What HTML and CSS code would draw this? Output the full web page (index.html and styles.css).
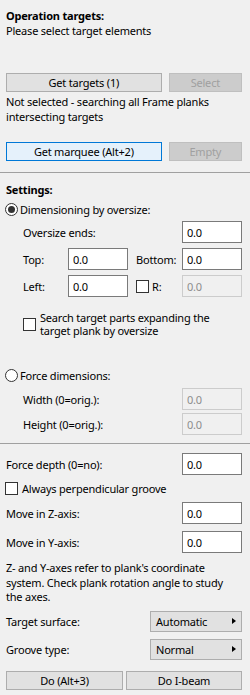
FILE: index.html
```html
<!DOCTYPE html>
<html>
<head>
    <title>Operation targets</title>
    <link rel="stylesheet" href="styles.css">
</head>
<body>
    <div class="panel">
        <div class="title">Operation targets:</div>
        <div class="line">Please select target elements</div>

        <div class="btnrow first">
            <button class="btn wide">Get targets (1)</button>
            <button class="btn small" disabled>Select</button>
        </div>
        <div class="note">Not selected - searching all Frame planks intersecting targets</div>

        <div class="btnrow marq">
            <button class="btn wide focus">Get marquee (Alt+2)</button>
            <button class="btn small" disabled>Empty</button>
        </div>

        <div class="sep sep1"></div>

        <div class="title settings">Settings:</div>
        <div class="radio radio1"><span class="dot on"></span>Dimensioning by oversize:</div>

        <div class="row r-over">
            <span class="lbl indent">Oversize ends:</span>
            <input class="field" value="0.0">
        </div>
        <div class="row r-top">
            <span class="lbl indent short">Top:</span>
            <input class="field" value="0.0">
            <span class="lbl mid">Bottom:</span>
            <input class="field" value="0.0">
        </div>
        <div class="row r-left">
            <span class="lbl indent short">Left:</span>
            <input class="field" value="0.0">
            <span class="lbl mid"><span class="box"></span>R:</span>
            <input class="field" value="0.0" disabled>
        </div>

        <div class="check multi"><span class="box"></span><span>Search target parts expanding the target plank by oversize</span></div>

        <div class="radio radio2"><span class="dot"></span>Force dimensions:</div>
        <div class="row r-width">
            <span class="lbl indent">Width (0=orig.):</span>
            <input class="field" value="0.0" disabled>
        </div>
        <div class="row r-height">
            <span class="lbl indent">Height (0=orig.):</span>
            <input class="field" value="0.0" disabled>
        </div>

        <div class="sep sep2"></div>

        <div class="row r-depth">
            <span class="lbl">Force depth (0=no):</span>
            <input class="field" value="0.0">
        </div>
        <div class="check single"><span class="box"></span><span>Always perpendicular groove</span></div>
        <div class="row r-z">
            <span class="lbl">Move in Z-axis:</span>
            <input class="field" value="0.0">
        </div>
        <div class="row r-y">
            <span class="lbl">Move in Y-axis:</span>
            <input class="field" value="0.0">
        </div>

        <div class="para">Z- and Y-axes refer to plank's coordinate<br>system. Check plank rotation angle to study<br>the axes.</div>

        <div class="row r-surface">
            <span class="lbl">Target surface:</span>
            <button class="drop">Automatic<span class="arrow"></span></button>
        </div>
        <div class="row r-groove">
            <span class="lbl">Groove type:</span>
            <button class="drop">Normal<span class="arrow"></span></button>
        </div>

        <div class="btnrow bottom">
            <button class="btn half">Do (Alt+3)</button>
            <button class="btn half">Do I-beam</button>
        </div>
    </div>
</body>
</html>
```

FILE: styles.css
```css
html, body {
    margin: 0;
    padding: 0;
    background-color: #f0f0f0;
}
body {
    font-family: "Noto Sans", "Open Sans", sans-serif;
    font-size: 11px;
    letter-spacing: -0.2px;
    color: #000;
}
.panel {
    width: 250px;
    height: 695px;
    box-sizing: border-box;
    padding: 8px 8px 0 6px;
    display: flex;
    flex-direction: column;
}
.title {
    font-weight: bold;
    line-height: 15px;
    height: 15px;
}
.line {
    line-height: 15px;
}
.btnrow {
    display: flex;
    gap: 7px;
    height: 19px;
}
.btnrow.first { margin-top: 35px; }
.btnrow.marq { margin-top: 18px; }
.btnrow.bottom { margin-top: 11px; gap: 3px; }
.btn {
    font: inherit;
    letter-spacing: inherit;
    color: #000;
    height: 19px;
    padding: 0;
    margin: 0;
    background-color: #e1e1e1;
    border: 1px solid #adadad;
    line-height: 17px;
}
.btn.wide { width: 157px; }
.btn.small { width: 74px; }
.btn.half { width: 118px; }
.btn.half + .btn.half { width: 117px; }
.btn.focus {
    background-color: #e5f1fb;
    border-color: #0078d7;
}
.btn:disabled {
    background-color: #cccccc;
    border-color: #bfbfbf;
    color: #a0a0a0;
}
.note {
    margin-top: 2px;
    line-height: 15px;
}
.sep {
    height: 1px;
    background-color: #a0a0a0;
    margin-left: -6px;
    margin-right: -8px;
}
.sep1 { margin-top: 11px; }
.sep2 { margin-top: 8px; }
.settings { margin-top: 9px; }
.radio {
    display: flex;
    align-items: center;
    height: 15px;
    line-height: 15px;
    margin-left: -1px;
}
.radio1 { margin-top: 5px; }
.radio2 { margin-top: 31px; }
.dot {
    width: 13px;
    height: 13px;
    border: 1px solid #333;
    border-radius: 50%;
    background-color: #fff;
    margin-right: 2px;
    box-sizing: border-box;
    position: relative;
}
.dot.on::after {
    content: "";
    position: absolute;
    left: 2px;
    top: 2px;
    width: 7px;
    height: 7px;
    border-radius: 50%;
    background-color: #333;
}
.row {
    display: flex;
    align-items: center;
    height: 22px;
}
.r-over { margin-top: 4px; }
.r-top { margin-top: 5px; }
.r-left { margin-top: 5px; }
.r-width { margin-top: 5px; }
.r-height { margin-top: 3px; }
.r-depth { margin-top: 9px; }
.r-z { margin-top: 6px; }
.r-y { margin-top: 7px; }
.r-surface { margin-top: 6px; height: 21px; }
.r-groove { margin-top: 7px; height: 21px; }
.lbl {
    flex: 1;
    display: flex;
    align-items: center;
}
.lbl.indent { padding-left: 17px; }
.lbl.short { flex: 0 0 62px; box-sizing: border-box; }
.lbl.mid { padding-left: 8px; }
.lbl.mid .box { margin-right: 3px; }
.field {
    font: inherit;
    letter-spacing: inherit;
    color: #000;
    width: 60px;
    height: 22px;
    box-sizing: border-box;
    border: 1px solid #7a7a7a;
    background-color: #fff;
    padding: 0 0 0 4px;
    margin: 0;
}
.field:disabled {
    border-color: #cccccc;
    background-color: #f0f0f0;
    color: #8d8d8d;
}
.box {
    display: inline-block;
    width: 13px;
    height: 13px;
    box-sizing: border-box;
    border: 1px solid #333;
    background-color: #fff;
    flex: none;
}
.check {
    display: flex;
    gap: 4px;
}
.check.multi {
    margin-top: 14px;
    padding-left: 17px;
    line-height: 13px;
    align-items: center;
}
.check.single {
    margin-top: 6px;
    line-height: 15px;
    align-items: center;
    margin-left: -1px;
}
.para {
    margin-top: 8px;
    line-height: 14.5px;
}
.drop {
    font: inherit;
    letter-spacing: inherit;
    color: #000;
    width: 92px;
    height: 21px;
    margin: 0;
    padding: 0 0 0 5px;
    background-color: #e1e1e1;
    border: 1px solid #adadad;
    text-align: left;
    position: relative;
}
.arrow {
    position: absolute;
    right: 5px;
    top: 6px;
    width: 0;
    height: 0;
    border-top: 3.5px solid transparent;
    border-bottom: 3.5px solid transparent;
    border-left: 4px solid #000;
}
```
